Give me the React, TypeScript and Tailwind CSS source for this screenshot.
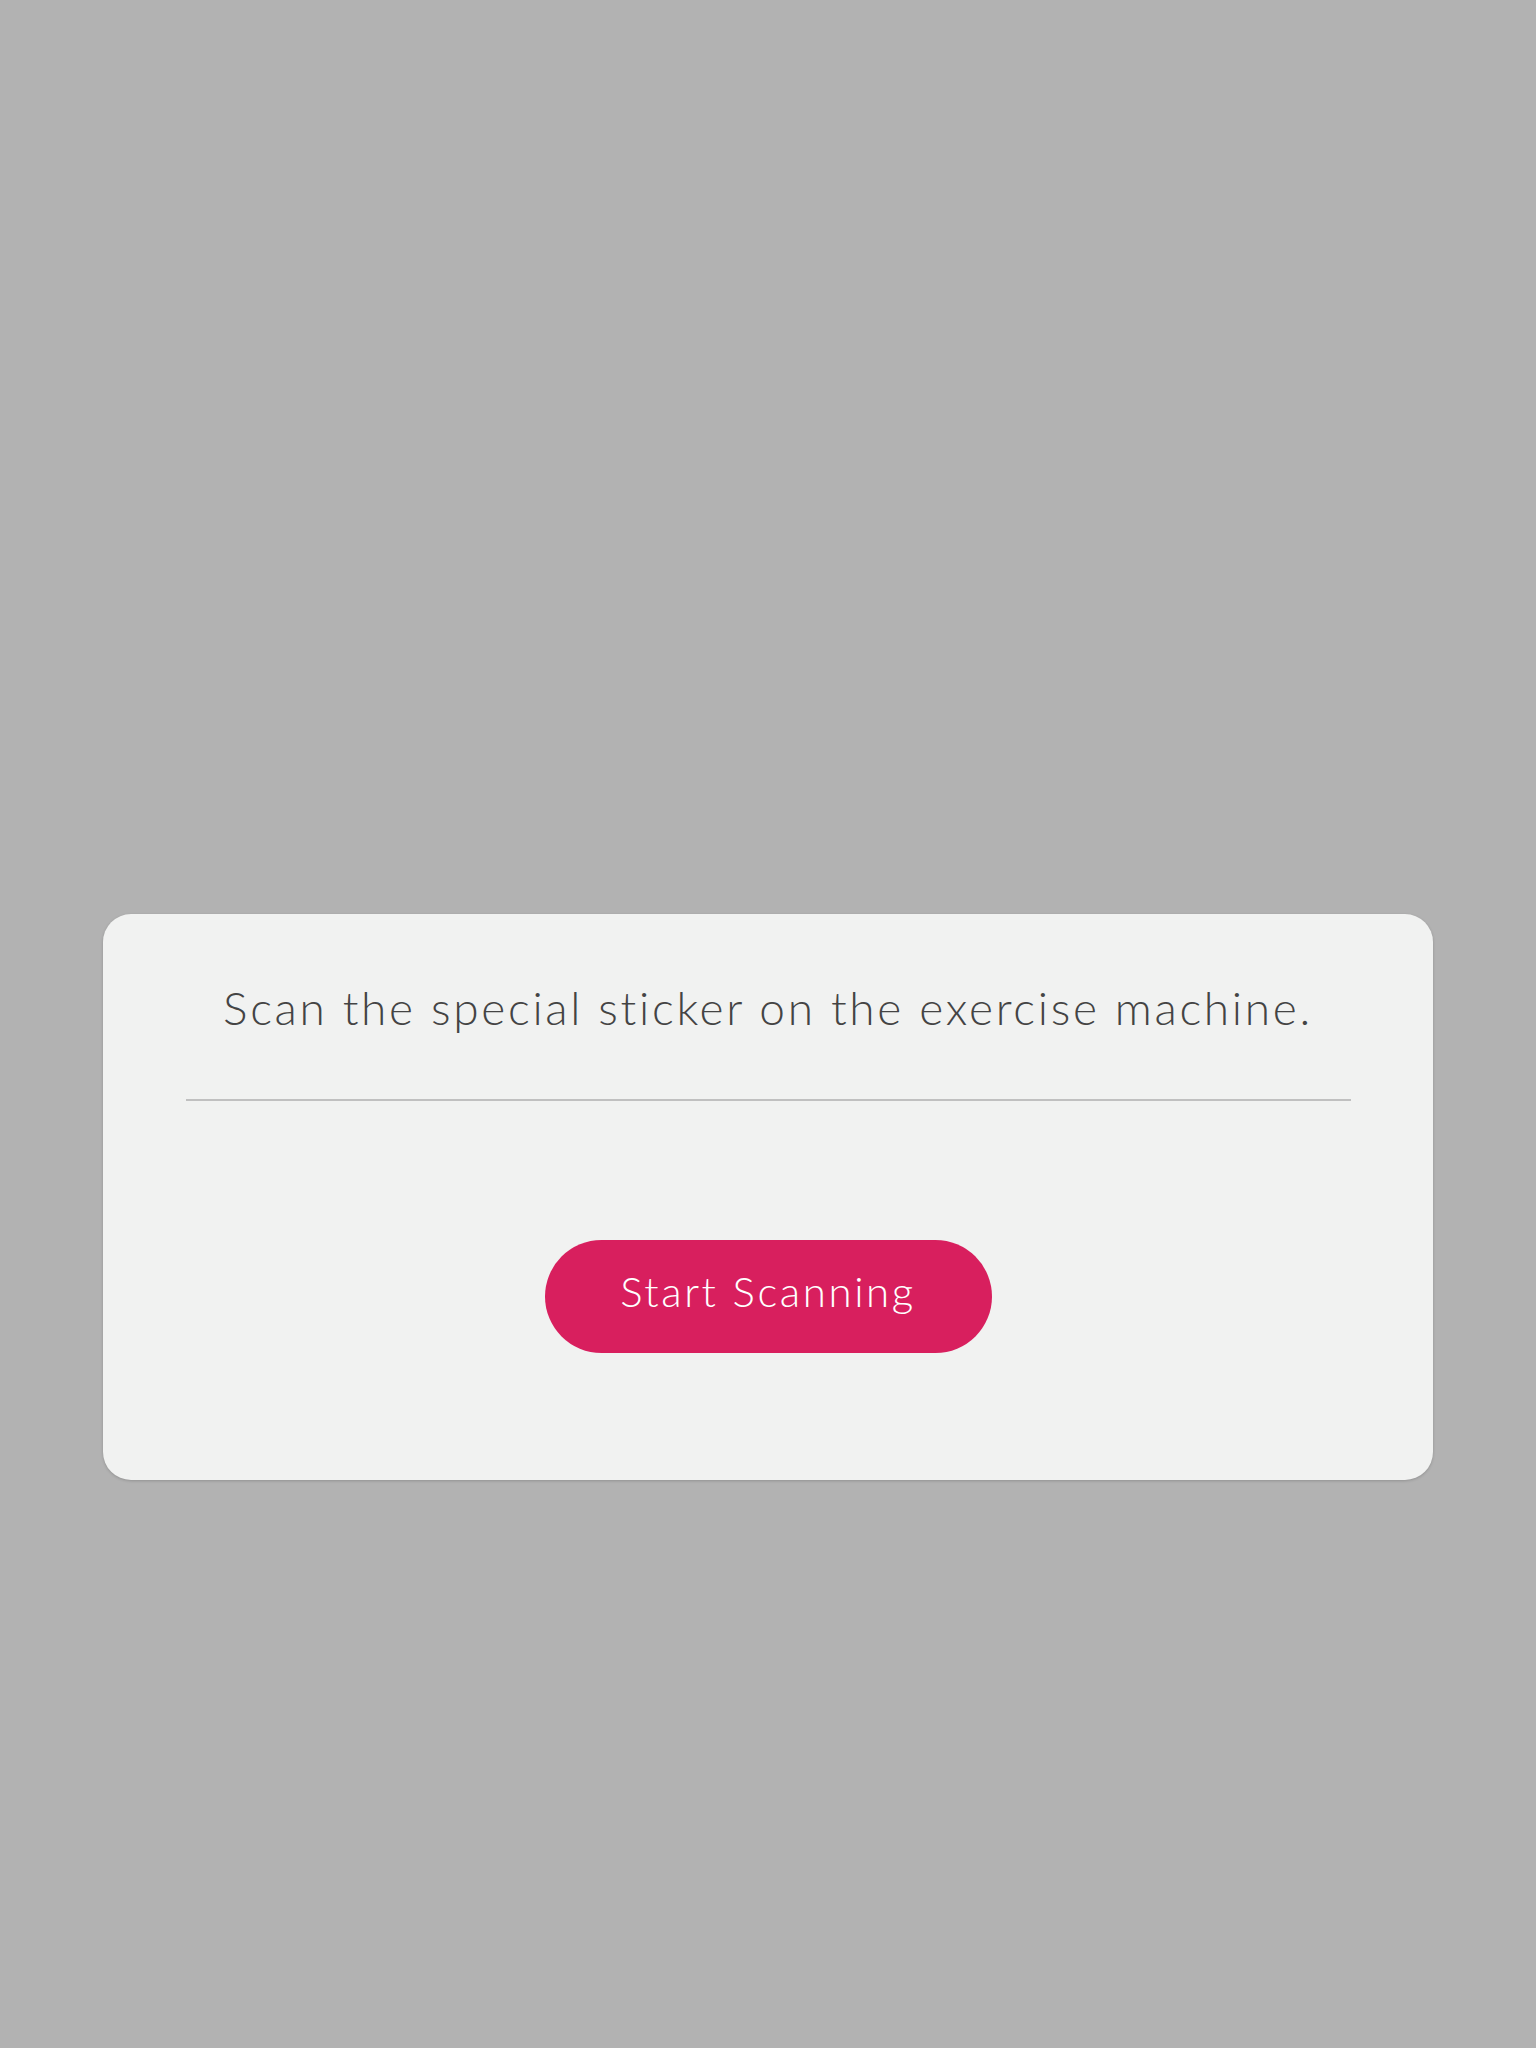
export default function App() {
  return (
    <div className="min-h-[2048px] w-full bg-[#b2b2b2] px-[103px] pt-[914px] font-['Lato','Open_Sans',sans-serif]">
      <div className="flex flex-col items-center rounded-[28px] bg-[#f1f2f1] pt-[62px] pb-[127px] shadow-[0_1px_3px_rgba(0,0,0,0.18)]">
        <h1 className="text-center text-[46px] leading-[64px] font-light tracking-[2.7px] text-[#444444]">
          Scan the special sticker on the exercise machine.
        </h1>
        <div className="mt-[59px] h-[2px] w-[1165px] bg-[#c0c0c0]" />
        <button className="mt-[139px] flex h-[113px] w-[447px] items-center justify-center rounded-full bg-[#d81f5e] pb-[10px] text-[42px] font-light tracking-[2.6px] text-white">
          Start Scanning
        </button>
      </div>
    </div>
  );
}
